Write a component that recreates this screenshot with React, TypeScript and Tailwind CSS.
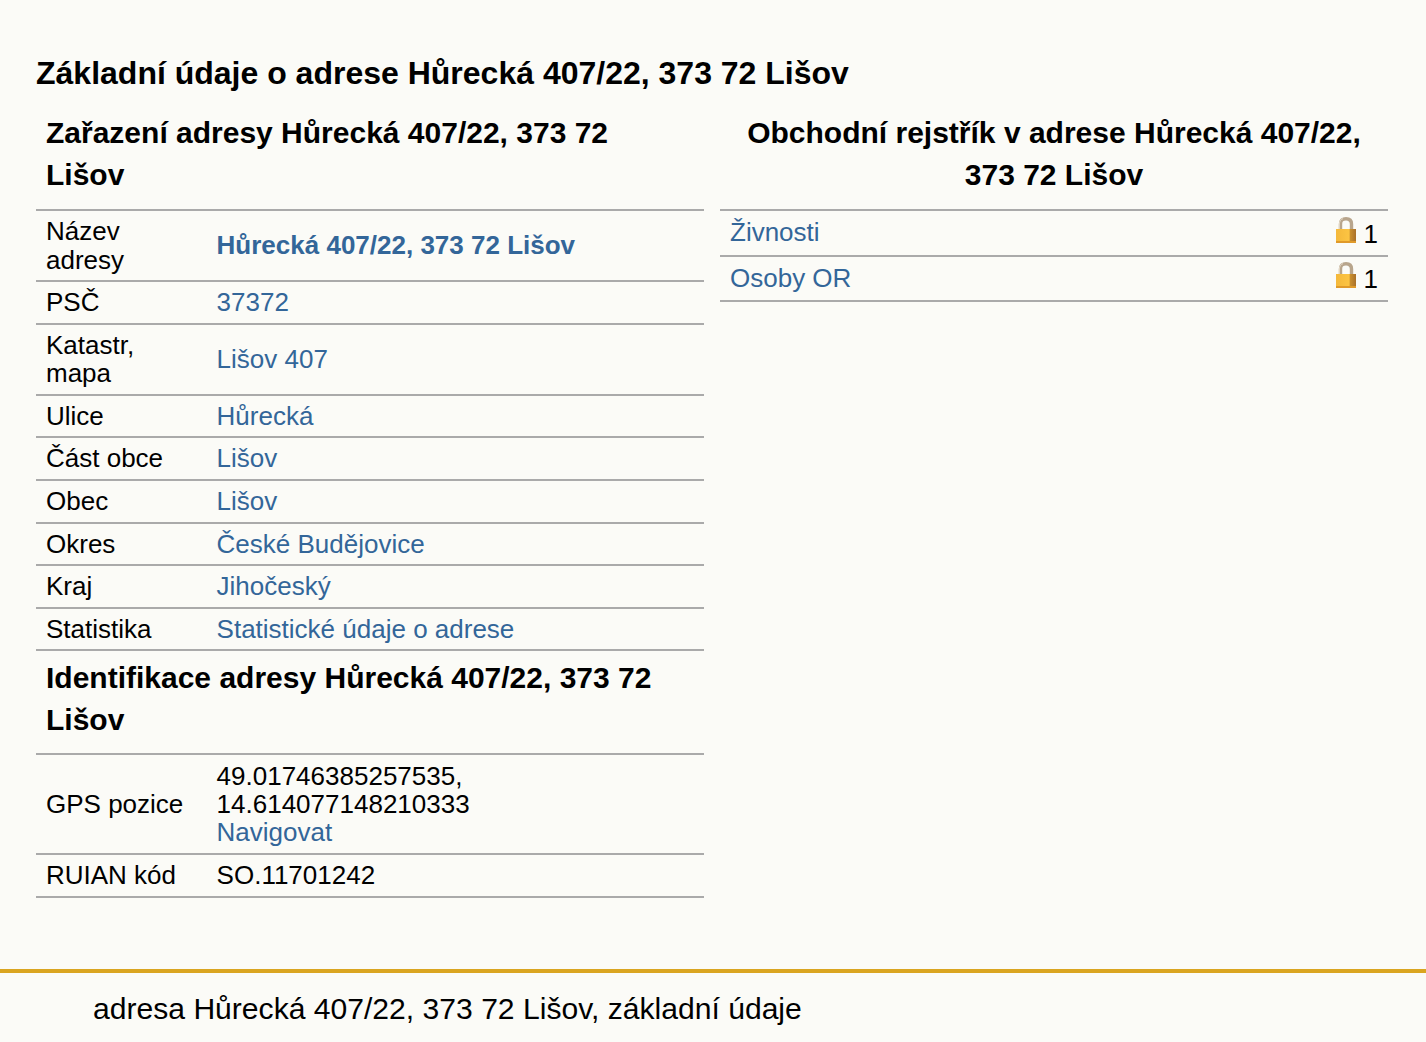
const fontStyle = "font-['Liberation_Sans',Arial,sans-serif]";

const addressRows = [
  { label: "Název adresy", value: "Hůrecká 407/22, 373 72 Lišov", bold: true },
  { label: "PSČ", value: "37372" },
  { label: "Katastr, mapa", value: "Lišov 407" },
  { label: "Ulice", value: "Hůrecká" },
  { label: "Část obce", value: "Lišov" },
  { label: "Obec", value: "Lišov" },
  { label: "Okres", value: "České Budějovice" },
  { label: "Kraj", value: "Jihočeský" },
  { label: "Statistika", value: "Statistické údaje o adrese" },
];

function LockIcon() {
  return (
    <svg width="20" height="26" viewBox="0 0 20 26" className="mb-[6px] shrink-0">
      <defs>
        <linearGradient id="lockBody" x1="0" y1="0" x2="1" y2="0">
          <stop offset="0" stopColor="#f4b83a" />
          <stop offset="0.65" stopColor="#fcc443" />
          <stop offset="0.72" stopColor="#c98f2e" />
          <stop offset="1" stopColor="#a9702a" />
        </linearGradient>
      </defs>
      <path
        d="M4.5 13V7C4.5 3.4 6.5 1.8 10 1.8s5.5 1.6 5.5 5.2V13"
        fill="none"
        stroke="#b8a58c"
        strokeWidth="3.4"
      />
      <path d="M3.4 12V7C3.4 4 5 2.4 7 1.6" fill="none" stroke="#e4d8c6" strokeWidth="1" />
      <rect x="0" y="12" width="20" height="14" fill="url(#lockBody)" />
      <rect x="0" y="24" width="20" height="2" fill="#e09a2a" />
    </svg>
  );
}

function Heading({ children, center }: { children: React.ReactNode; center?: boolean }) {
  return (
    <h3 className={`px-[10px] text-[30px] leading-[42px] font-bold text-black ${center ? "text-center" : ""}`}>
      {children}
    </h3>
  );
}

function Row({ label, children }: { label: string; children: React.ReactNode }) {
  return (
    <tr className="border-b-2 border-[#aaaaaa]">
      <td className="w-[170.6px] px-[10px] py-[6.11px] align-middle">{label}</td>
      <td className="px-[10px] py-[6.11px] align-middle">{children}</td>
    </tr>
  );
}

export default function App() {
  return (
    <div className={`${fontStyle} min-h-[1042px] bg-[#fbfbf7] text-[26px] leading-[28.4px] text-black`}>
      <div className="h-[969px] px-[36px] pt-[52px]">
        <h2 className="text-[32px] leading-[43px] font-bold">
          Základní údaje o adrese Hůrecká 407/22, 373 72 Lišov
        </h2>
        <div className="mt-[17px] grid grid-cols-[668px_668px] gap-x-[16px]">
          <div>
            <Heading>Zařazení adresy Hůrecká 407/22, 373 72 Lišov</Heading>
            <table className="mt-[13px] w-full border-t-2 border-[#aaaaaa] border-collapse">
              <tbody>
                {addressRows.map((row) => (
                  <Row key={row.label} label={row.label}>
                    <a className={`text-[#336699] ${row.bold ? "font-bold" : ""}`}>{row.value}</a>
                  </Row>
                ))}
              </tbody>
            </table>
            <div className="mt-[6px]">
              <Heading>Identifikace adresy Hůrecká 407/22, 373 72 Lišov</Heading>
            </div>
            <table className="mt-[12px] w-full border-t-2 border-[#aaaaaa] border-collapse">
              <tbody>
                <Row label="GPS pozice">
                  <div className="w-[300px]">49.01746385257535, 14.614077148210333</div>
                  <a className="text-[#336699]">Navigovat</a>
                </Row>
                <tr className="h-[43px] border-b-2 border-[#aaaaaa]">
                  <td className="px-[10px] align-middle">RUIAN kód</td>
                  <td className="px-[10px] align-middle">SO.11701242</td>
                </tr>
              </tbody>
            </table>
          </div>
          <div>
            <Heading center>Obchodní rejstřík v adrese Hůrecká 407/22, 373 72 Lišov</Heading>
            <div className="mt-[13px] border-t-2 border-[#aaaaaa]">
              {["Živnosti", "Osoby OR"].map((name) => (
                <div
                  key={name}
                  className="flex h-[45.5px] items-center justify-between border-b-2 border-[#aaaaaa] pl-[10px] pr-[10px]"
                >
                  <a className="pb-[1px] text-[#336699]">{name}</a>
                  <span className="flex items-center gap-[8px]">
                    <LockIcon />
                    <span className="pt-[2px]">1</span>
                  </span>
                </div>
              ))}
            </div>
          </div>
        </div>
      </div>
      <footer className="h-[73px] border-t-4 border-[#daa520] pl-[93px] pt-[19px] text-[30.1px] leading-[34px]">
        adresa Hůrecká 407/22, 373 72 Lišov, základní údaje
      </footer>
    </div>
  );
}
